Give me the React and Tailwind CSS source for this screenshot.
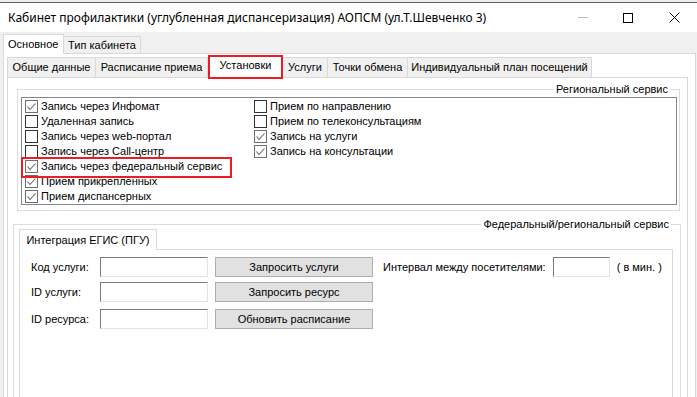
import React from "react";

const Check = ({ checked }) => (
  <span
    className={
      checked
        ? "w-[13px] h-[13px] border border-[#6e6e6e] bg-white flex items-center justify-center shrink-0"
        : "w-[13px] h-[13px] border border-[#333333] bg-white flex items-center justify-center shrink-0"
    }
  >
    {checked && (
      <svg width="11" height="11" viewBox="0 0 11 11">
        <path d="M1.5 5.5 L4 8.5 L9.5 2.5" stroke="#666" strokeWidth="1.1" fill="none" />
      </svg>
    )}
  </span>
);

const Row = ({ checked, label }) => (
  <div className="h-[15px] flex items-center">
    <Check checked={checked} />
    <span className="ml-[3px] leading-[15px] whitespace-nowrap">{label}</span>
  </div>
);

const left = [
  [true, "Запись через Инфомат"],
  [false, "Удаленная запись"],
  [false, "Запись через web-портал"],
  [false, "Запись через Call-центр"],
  [true, "Запись через федеральный сервис"],
  [true, "Прием прикрепленных"],
  [true, "Прием диспансерных"],
];

const right = [
  [false, "Прием по направлению"],
  [false, "Прием по телеконсультациям"],
  [true, "Запись на услуги"],
  [true, "Запись на консультации"],
];

const innerTabs = [
  ["Общие данные", "w-[89px]"],
  ["Расписание приема", "w-[112px]"],
];
const innerTabs2 = [
  ["Услуги", "w-[45px]"],
  ["Точки обмена", "w-[80px]"],
  ["Индивидуальный план посещений", "w-[184px]"],
];

const TextBox = ({ w }) => (
  <div className={`${w} h-[20px] bg-white border border-t-[#7a7a7a] border-l-[#7a7a7a] border-r-[#e3e3e3] border-b-[#e3e3e3]`} />
);

const Button = ({ children }) => (
  <div className="w-[158px] h-[20px] bg-[#e1e1e1] border border-[#adadad] flex items-center justify-center leading-none">
    {children}
  </div>
);

export default function App() {
  return (
    <div className="w-[697px] h-[397px] overflow-hidden bg-[#f0f0f0] text-[11px] text-black font-['Liberation_Sans',sans-serif]">
      <div className="h-[2px] bg-[#ececec]" />
      <div className="h-px bg-[#5e5e5e]" />
      {/* title bar */}
      <div className="h-[29px] bg-white flex items-center">
        <span className="pl-[8px] text-[12px] font-['Noto_Sans',sans-serif] whitespace-nowrap">
          Кабинет профилактики (углубленная диспансеризация) АОПСМ (ул.Т.Шевченко 3)
        </span>
        <div className="ml-auto flex items-center">
          <div className="w-[10px] h-px bg-[#bdbdbd] mr-[35px]" />
          <div className="w-[10px] h-[10px] border border-black mr-[36px]" />
          <svg width="11" height="11" viewBox="0 0 11 11" className="mr-[17px]">
            <path d="M0.5 0.5 L10.5 10.5 M10.5 0.5 L0.5 10.5" stroke="#000" strokeWidth="1" />
          </svg>
        </div>
      </div>
      {/* outer tabs */}
      <div className="h-[21px] flex items-end pl-[3px]">
        <div className="w-[61px] h-[20px] bg-white border border-b-0 border-[#d9d9d9] relative z-10 mb-[-1px] flex items-center pl-[4px]">
          Основное
        </div>
        <div className="w-[77px] h-[17px] bg-[#f0f0f0] border border-b-0 border-l-0 border-[#d9d9d9] flex items-center justify-center">
          Тип кабинета
        </div>
      </div>
      {/* outer page */}
      <div className="ml-[3px] w-[693px] h-[400px] bg-white border border-b-0 border-[#d9d9d9]">
        <div className="h-[23px] flex items-end pl-[3px]">
          {innerTabs.map(([t, w], i) => (
            <div
              key={t}
              className={`${w} h-[20px] bg-[#f0f0f0] border border-b-0 ${i ? "border-l-0" : ""} border-[#d9d9d9] flex items-center justify-center whitespace-nowrap`}
            >
              {t}
            </div>
          ))}
          <div className="w-[75px] h-[24px] bg-white border-2 border-[#ec1c24] relative z-10 mb-[-2px] flex items-center justify-center pb-[3px]">
            Установки
          </div>
          {innerTabs2.map(([t, w]) => (
            <div
              key={t}
              className={`${w} h-[20px] bg-[#f0f0f0] border border-b-0 border-l-0 border-[#d9d9d9] flex items-center justify-center whitespace-nowrap`}
            >
              {t}
            </div>
          ))}
        </div>
        {/* inner page */}
        <div className="ml-[3px] w-[681px] h-[400px] bg-white border border-b-0 border-[#d9d9d9]">
          {/* regional group */}
          <div className="relative mt-[11px] ml-[9px] w-[663px] h-[122px] border border-[#dcdcdc] pt-[7px] pl-[3px]">
            <span className="absolute right-[9px] top-[-8px] bg-white px-[2px] leading-[15px]">
              Региональный сервис
            </span>
            <div className="relative w-[656px] h-[108px] border border-[#828790] bg-white pt-px pl-[3px] flex">
              <div className="w-[229px]">
                {left.map(([c, l]) => (
                  <Row key={l} checked={c} label={l} />
                ))}
              </div>
              <div>
                {right.map(([c, l]) => (
                  <Row key={l} checked={c} label={l} />
                ))}
              </div>
              <div className="absolute left-[-1px] top-[59px] w-[211px] h-[21px] border-2 border-[#ec1c24]" />
            </div>
          </div>
          {/* federal group */}
          <div className="relative mt-[13px] ml-[5px] w-[668px] h-[200px] border border-b-0 border-[#dcdcdc] pt-[4px] pl-[5px]">
            <span className="absolute right-[9px] top-[-8px] bg-white px-[2px] leading-[15px]">
              Федеральный/региональный сервис
            </span>
            <div className="h-[20px] flex items-end">
              <div className="w-[138px] h-[21px] bg-white border border-b-0 border-[#d9d9d9] relative z-10 mb-[-1px] flex items-center justify-center">
                Интеграция ЕГИС (ПГУ)
              </div>
            </div>
            <div className="w-[654px] h-[200px] bg-white border border-b-0 border-[#d9d9d9] pt-[7px] pl-[11px]">
              <div className="flex items-center h-[20px]">
                <span className="w-[69px]">Код услуги:</span>
                <TextBox w="w-[108px]" />
                <div className="ml-[7px]">
                  <Button>Запросить услуги</Button>
                </div>
                <span className="ml-[10px] whitespace-nowrap">Интервал между посетителями:</span>
                <div className="ml-[7px]">
                  <TextBox w="w-[57px]" />
                </div>
                <span className="ml-[7px] whitespace-nowrap">( в мин. )</span>
              </div>
              <div className="flex items-center h-[20px] mt-[5px]">
                <span className="w-[69px]">ID услуги:</span>
                <TextBox w="w-[108px]" />
                <div className="ml-[7px]">
                  <Button>Запросить ресурс</Button>
                </div>
              </div>
              <div className="flex items-center h-[20px] mt-[7px]">
                <span className="w-[69px]">ID ресурса:</span>
                <TextBox w="w-[108px]" />
                <div className="ml-[7px]">
                  <Button>Обновить расписание</Button>
                </div>
              </div>
            </div>
          </div>
        </div>
      </div>
    </div>
  );
}
